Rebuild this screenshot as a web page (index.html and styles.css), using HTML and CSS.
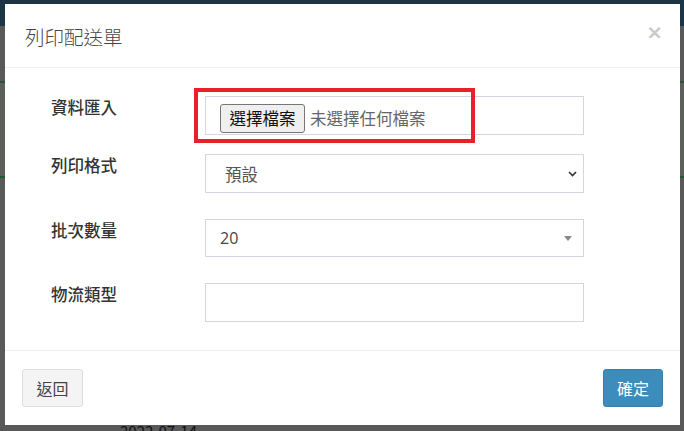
FILE: index.html
```html
<!DOCTYPE html>
<html lang="zh-Hant">
<head>
<meta charset="utf-8">
<title>列印配送單</title>
<link rel="stylesheet" href="styles.css">
</head>
<body>
<div class="page">
  <div class="topbar"></div>
  <div class="page-band"></div>
  <div class="page-date">2022-07-14</div>
</div>
<div class="modal">
  <div class="modal-header">
    <h4 class="modal-title">列印配送單</h4>
    <span class="close">×</span>
  </div>
  <div class="modal-body">
    <div class="form-row first">
      <label class="control-label">資料匯入</label>
      <div class="form-control file-control">
        <span class="file-btn">選擇檔案</span>
        <span class="file-none">未選擇任何檔案</span>
      </div>
    </div>
    <div class="form-row">
      <label class="control-label">列印格式</label>
      <div class="form-control select-control">
        <span class="select-value">預設</span>
        <svg class="chevron" width="9" height="6" viewBox="0 0 9 6"><path d="M1 1 L4.5 4.5 L8 1" fill="none" stroke="#333" stroke-width="1.6"/></svg>
      </div>
    </div>
    <div class="form-row">
      <label class="control-label">批次數量</label>
      <div class="form-control select2-control">
        <span class="select2-value">20</span>
        <span class="caret"></span>
      </div>
    </div>
    <div class="form-row last">
      <label class="control-label">物流類型</label>
      <div class="form-control"></div>
    </div>
    <div class="highlight"></div>
  </div>
  <div class="modal-footer">
    <button class="btn btn-default">返回</button>
    <button class="btn btn-primary">確定</button>
  </div>
</div>
</body>
</html>
```

FILE: styles.css
```css
* { box-sizing: border-box; }
html, body { margin: 0; padding: 0; }
body {
  width: 684px;
  height: 431px;
  overflow: hidden;
  background: #595959;
  font-family: "Noto Sans CJK TC", "Noto Sans", sans-serif;
  position: relative;
}
.page { height: 431px; }
.topbar { height: 26px; background: #1b3547; }
.page-band {
  margin-top: 55px;
  height: 97px;
  border-top: 2px solid #1f5a34;
  border-bottom: 2px solid #1f5a34;
  background: #5c5f5c;
}
.page-date {
  margin: 245px 0 0 120px;
  font-size: 15px;
  color: #111;
  line-height: 16px;
}
.modal {
  position: absolute;
  left: 5px;
  top: 4px;
  width: 675px;
  height: 421px;
  background: #fff;
  display: flex;
  flex-direction: column;
}
.modal-header {
  height: 64px;
  border-bottom: 1px solid #f0f0f0;
  padding: 0 17px 0 20px;
  display: flex;
  align-items: center;
  justify-content: space-between;
}
.modal-title {
  margin: 0;
  font-size: 19.5px;
  font-weight: 300;
  color: #444;
  line-height: 28px;
  position: relative;
  top: 1px;
}
.close {
  font-size: 20px;
  font-weight: bold;
  color: #c9c9c9;
  line-height: 20px;
  font-family: "DejaVu Sans", sans-serif;
  position: relative;
  top: -4px;
}
.modal-body {
  position: relative;
  padding: 28px 0 28px 46px;
}
.form-row {
  display: grid;
  grid-template-columns: 154px 379px;
  margin-bottom: 26px;
}
.form-row.first { margin-bottom: 19px; }
.form-row.last { margin-bottom: 0; }
.control-label {
  font-size: 16.5px;
  font-weight: 500;
  color: #333;
  line-height: 22px;
  padding-top: 0;
}
.form-control {
  height: 39px;
  border: 1px solid #d2d6de;
  display: flex;
  align-items: center;
  font-size: 16.5px;
}
.file-control { padding-left: 14px; align-items: flex-start; padding-top: 7px; }
.file-btn {
  display: inline-block;
  height: 29px;
  width: 85px;
  border: 1px solid #767676;
  border-radius: 3px;
  background: #efefef;
  color: #111;
  font-size: 16.5px;
  line-height: 26px;
  text-align: center;
}
.file-none {
  margin-left: 5px;
  color: #666;
  line-height: 29px;
}
.select-control { padding: 0 6px 0 19px; justify-content: space-between; }
.select-value { color: #555; }
.chevron { margin-top: 1px; }
.select2-control { height: 38px; padding: 0 11px 0 14px; justify-content: space-between; }
.select2-value { color: #444; font-family: "Open Sans", sans-serif; font-size: 16px; }
.caret {
  width: 0;
  height: 0;
  border-left: 4px solid transparent;
  border-right: 4px solid transparent;
  border-top: 5px solid #888;
}
.highlight {
  position: absolute;
  left: 189px;
  top: 20px;
  width: 281px;
  height: 55px;
  border: 4px solid #e8202a;
}
.modal-footer {
  border-top: 1px solid #f0f0f0;
  padding: 18px 17px 0 17px;
  display: flex;
  justify-content: space-between;
  align-items: flex-start;
}
.btn {
  height: 38px;
  font-family: "Noto Sans CJK TC", sans-serif;
  font-size: 16px;
  border-radius: 3px;
  padding: 0;
}
.btn-default { width: 61px; background: #f4f4f4; border: 1px solid #ddd; color: #444; }
.btn-primary { width: 60px; background: #3c8dbc; border: 1px solid #367fa9; color: #fff; }
```
